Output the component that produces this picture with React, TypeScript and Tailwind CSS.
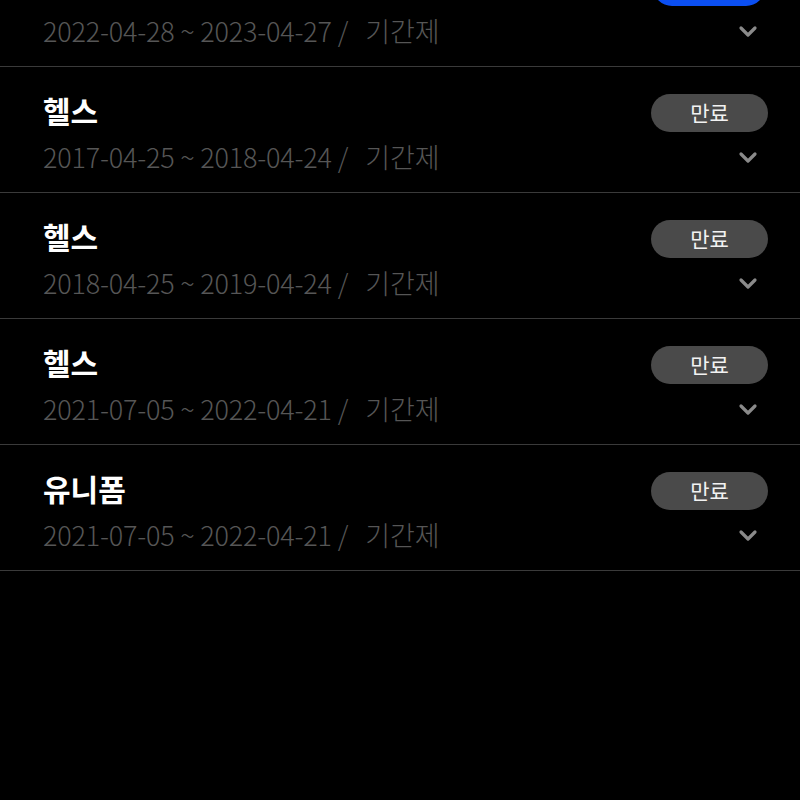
import React from 'react';

interface Pass {
  name: string;
  period: string;
  status: 'active' | 'expired';
}

const passes: Pass[] = [
  { name: '헬스', period: '2022-04-28 ~ 2023-04-27', status: 'active' },
  { name: '헬스', period: '2017-04-25 ~ 2018-04-24', status: 'expired' },
  { name: '헬스', period: '2018-04-25 ~ 2019-04-24', status: 'expired' },
  { name: '헬스', period: '2021-07-05 ~ 2022-04-21', status: 'expired' },
  { name: '유니폼', period: '2021-07-05 ~ 2022-04-21', status: 'expired' },
];

const font = { fontFamily: '"Noto Sans CJK KR", "Noto Sans", sans-serif' };
const lightFont = {
  fontFamily: '"Noto Sans CJK KR Light", "Noto Sans CJK KR DemiLight", "Noto Sans CJK KR", sans-serif',
};

const Chevron = () => (
  <svg width="20" height="14" viewBox="0 0 20 14" fill="none">
    <polyline
      points="3,3 10,10 17,3"
      stroke="#8a8a8a"
      strokeWidth="3.2"
      strokeLinecap="round"
      strokeLinejoin="round"
    />
  </svg>
);

const PassRow: React.FC<{ pass: Pass }> = ({ pass }) => (
  <div className="flex flex-col pl-[43px] pr-[32px] pt-[26px] pb-[17px] border-b border-[#3a3a3a]">
    <div className="flex items-center justify-between h-[36px]">
      <span className="text-[30px] leading-[36px] font-bold text-white -mt-[3px]">{pass.name}</span>
      {pass.status === 'active' ? (
        <span className="w-[112px] h-[38px] mt-[4px] rounded-full bg-[#0b4ff2] text-white text-[21px] flex items-center justify-center mr-[3px]">
          이용중
        </span>
      ) : (
        <span className="w-[117px] h-[38px] mt-[4px] rounded-full bg-[#4a4a4a] text-[#f2f2f2] text-[21px] font-normal flex items-center justify-center">
          만료
        </span>
      )}
    </div>
    <div className="flex items-center justify-between mt-[10px] h-[36px]">
      <span
        className="text-[27px] leading-[36px] font-light text-[#565656] tracking-[-0.2px] whitespace-pre"
        style={lightFont}
      >
        {pass.period + ' /   기간제'}
      </span>
      <span className="mr-[10px] mt-[2px] flex items-center">
        <Chevron />
      </span>
    </div>
  </div>
);

export default function App() {
  return (
    <div className="w-[800px] h-[800px] bg-black overflow-hidden" style={font}>
      <div className="-mt-[59px] flex flex-col">
        {passes.map((p, i) => (
          <PassRow key={i} pass={p} />
        ))}
      </div>
    </div>
  );
}
